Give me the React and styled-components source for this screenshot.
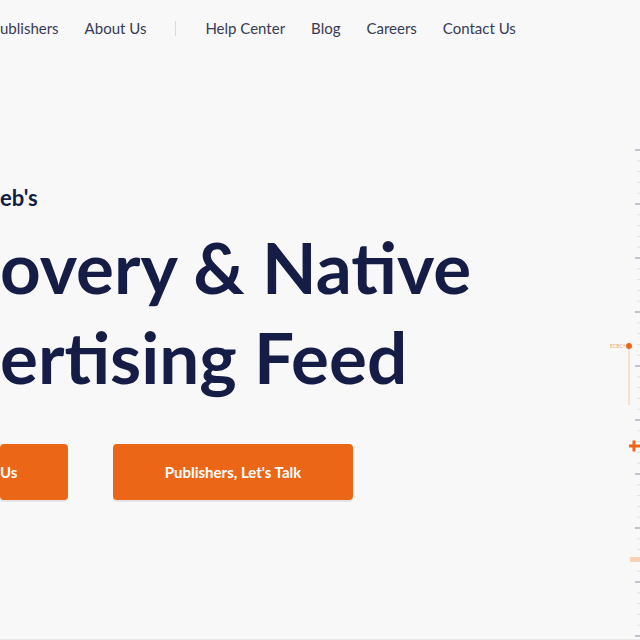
import React from 'react';
import styled, { createGlobalStyle } from 'styled-components';

// --- Global ---
const GlobalStyle = createGlobalStyle`
  html, body {
    margin: 0;
    padding: 0;
    background: #f8f8f8;
  }
  body {
    font-family: Lato, "Noto Sans", sans-serif;
    overflow: hidden;
  }
`;

const ORANGE = '#ec6617';
const NAVY = '#151c45';

// --- Styled Components ---
const Page = styled.div`
  display: flex;
  width: 640px;
  height: 640px;
  box-sizing: border-box;
  border-bottom: 1px solid #ebebeb;
`;

const Main = styled.div`
  flex: 1;
  display: flex;
  flex-direction: column;
`;

const Nav = styled.nav`
  display: flex;
  align-items: center;
  gap: 26px;
  height: 56px;
  font-size: 15px;
  color: #373b55;
`;

const NavLink = styled.a`
  color: inherit;
  text-decoration: none;
  white-space: nowrap;
`;

const NavDivider = styled.span`
  width: 1px;
  height: 15px;
  background: #d9d9e0;
  margin: 0 3px;
`;

const Hero = styled.section`
  display: flex;
  flex-direction: column;
  padding-top: 128px;
`;

const Kicker = styled.div`
  font-size: 22px;
  line-height: 28px;
  font-weight: 700;
  color: ${NAVY};
`;

const Headline = styled.h1`
  margin: 10px 0 0;
  font-size: 71px;
  line-height: 90px;
  font-weight: 700;
  color: ${NAVY};
  white-space: nowrap;
`;

const Actions = styled.div`
  display: flex;
  gap: 45px;
  margin-top: 42px;
`;

const Button = styled.button`
  display: flex;
  align-items: center;
  justify-content: ${({ $align }) => $align || 'center'};
  width: ${({ $width }) => $width}px;
  height: 56px;
  border: none;
  border-radius: 4px;
  background: ${ORANGE};
  color: #fff;
  font-family: inherit;
  font-size: 15px;
  font-weight: 700;
  box-shadow: 0 2px 0 rgba(0, 0, 0, 0.08);
  cursor: pointer;
  padding: 0;
`;

const Ruler = styled.svg`
  flex: none;
  display: block;
`;

// --- Ruler drawing ---
function RulerGraphic() {
  const ticks = [];
  for (let i = 0; 150 + i * 10.8 < 640; i++) {
    const y = 150 + i * 10.8;
    const major = i % 5 === 0;
    ticks.push(
      <line
        key={i}
        x1={major ? 35 : 37}
        x2={40}
        y1={y}
        y2={y}
        stroke={major ? '#8a8ca8' : '#dedee6'}
        strokeWidth={1}
      />
    );
  }
  return (
    <Ruler width="40" height="640" viewBox="0 0 40 640">
      {ticks}
      <text x="10" y="348" fontSize="5" fill="#f2a06c" fontFamily="Lato, sans-serif">ECBC+</text>
      <line x1="29" x2="29" y1="349" y2="405" stroke="#f8c8a6" strokeWidth="1" />
      <circle cx="29" cy="346" r="3" fill={ORANGE} />
      <line x1="29" x2="40" y1="446" y2="446" stroke={ORANGE} strokeWidth="3" />
      <line x1="34" x2="34" y1="440.5" y2="451.5" stroke={ORANGE} strokeWidth="3" />
      <rect x="30" y="557" width="10" height="5" fill="#f8d2b6" />
    </Ruler>
  );
}

// --- Main Component ---
export default function App() {
  const links = ['ublishers', 'About Us'];
  const helpLinks = ['Help Center', 'Blog', 'Careers', 'Contact Us'];

  return (
    <>
      <GlobalStyle />
      <Page>
        <Main>
          <Nav>
            {links.map(l => <NavLink key={l} href="#">{l}</NavLink>)}
            <NavDivider />
            {helpLinks.map(l => <NavLink key={l} href="#">{l}</NavLink>)}
          </Nav>
          <Hero>
            <Kicker>eb's</Kicker>
            <Headline>
              overy &amp; Native
              <br />
              ertising Feed
            </Headline>
            <Actions>
              <Button $width={68} $align="flex-start">Us</Button>
              <Button $width={240}>Publishers, Let's Talk</Button>
            </Actions>
          </Hero>
        </Main>
        <RulerGraphic />
      </Page>
    </>
  );
}
